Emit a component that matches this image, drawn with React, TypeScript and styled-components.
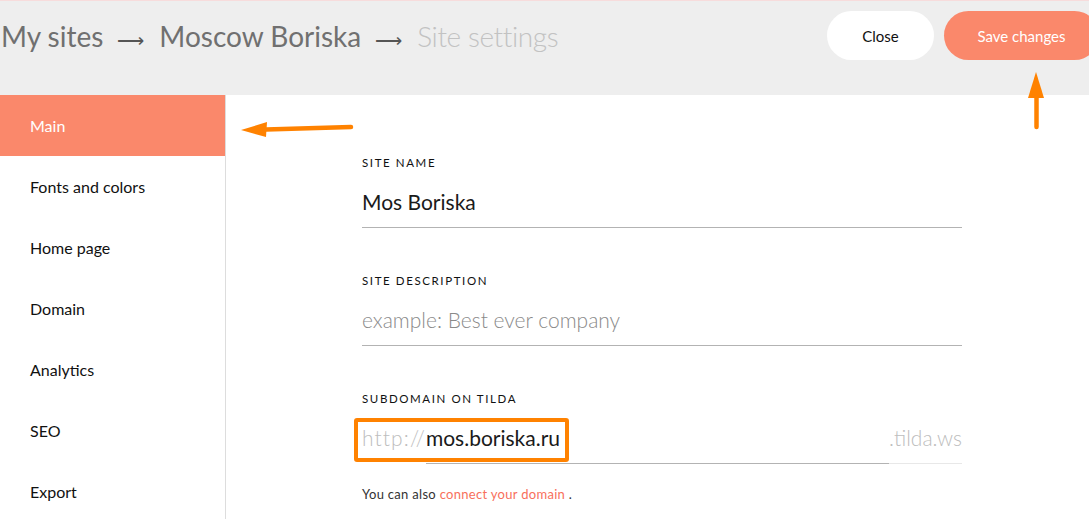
import React from "react";
import styled, { createGlobalStyle } from "styled-components";

const Global = createGlobalStyle`
  html, body { margin: 0; padding: 0; background: #fff; overflow: hidden; }
  body { font-family: "Lato", "Noto Sans", sans-serif; -webkit-font-smoothing: antialiased; }
  * { box-sizing: border-box; }
`;

const Page = styled.div`
  position: relative;
  width: 1089px;
  height: 519px;
  display: flex;
  flex-direction: column;
  overflow: hidden;
`;

const Header = styled.header`
  height: 95px;
  flex: none;
  background: #eeeeee;
  border-top: 1px solid #f7dcdc;
  display: flex;
  justify-content: space-between;
  align-items: flex-start;
  padding: 10px 0 0 1px;
`;

const Crumbs = styled.div`
  display: flex;
  align-items: baseline;
  gap: 14px;
  padding-top: 9px;
  font-size: 28px;
  line-height: 32px;
  color: #707070;
`;

const Crumb = styled.span<{ $current?: boolean }>`
  color: ${(p) => (p.$current ? "#c2c2c2" : "#707070")};
  font-weight: ${(p) => (p.$current ? 300 : 400)};
  letter-spacing: ${(p) => (p.$current ? "-0.4px" : "0")};
`;

const Sep = styled.span`
  font-size: 19px;
  color: #555;
  font-weight: 300;
  margin-right: 1px;
`;

const Actions = styled.div`
  display: flex;
  gap: 10px;
  margin-right: -10px;
`;

const Pill = styled.button<{ $primary?: boolean }>`
  height: 49px;
  border: none;
  border-radius: 25px;
  padding: 0;
  width: ${(p) => (p.$primary ? "155px" : "107px")};
  background: ${(p) => (p.$primary ? "#fa886b" : "#ffffff")};
  color: ${(p) => (p.$primary ? "#ffffff" : "#111111")};
  font-family: inherit;
  font-size: 15px;
  cursor: pointer;
`;

const Body = styled.div`
  flex: 1;
  display: flex;
  min-height: 0;
`;

const Sidebar = styled.nav`
  width: 226px;
  flex: none;
  border-right: 1px solid #dddddd;
  display: flex;
  flex-direction: column;
`;

const NavItem = styled.div<{ $active?: boolean }>`
  height: 61px;
  flex: none;
  display: flex;
  align-items: center;
  padding-left: 30px;
  font-size: 16px;
  color: ${(p) => (p.$active ? "#ffffff" : "#111111")};
  background: ${(p) => (p.$active ? "#fa886b" : "transparent")};
`;

const Content = styled.main`
  flex: 1;
  padding: 61px 0 0 136px;
`;

const Form = styled.div`
  width: 600px;
  display: flex;
  flex-direction: column;
  gap: 46px;
`;

const Field = styled.div`
  display: flex;
  flex-direction: column;
  gap: 17px;
`;

const Label = styled.div`
  font-size: 11.5px;
  line-height: 14px;
  letter-spacing: 1.6px;
  text-transform: uppercase;
  color: #111;
`;

const InputRow = styled.div`
  position: relative;
  display: flex;
  align-items: stretch;
`;

const Segment = styled.div<{ $tone: "value" | "placeholder" | "prefix" | "suffix"; $line: "dark" | "light" | "none"; $grow?: boolean }>`
  flex: ${(p) => (p.$grow ? "1" : "none")};
  font-size: 21px;
  line-height: 30px;
  padding-bottom: 10px;
  font-weight: ${(p) => (p.$tone === "value" ? 400 : 300)};
  letter-spacing: ${(p) => (p.$tone === "prefix" ? "1.1px" : "0")};
  color: ${(p) =>
    p.$tone === "value" ? "#1a1a1a" : p.$tone === "placeholder" ? "#8a8a8a" : "#bdbdbd"};
  border-bottom: 1px solid
    ${(p) => (p.$line === "dark" ? "#b3b3b3" : p.$line === "light" ? "#e8e8e8" : "transparent")};
  white-space: nowrap;
`;

const Highlight = styled.div`
  position: absolute;
  left: -8px;
  top: -5px;
  width: 215px;
  height: 44px;
  border: 4px solid #ff8200;
  border-radius: 3px;
  pointer-events: none;
`;

const Hint = styled.div`
  margin-top: -24px;
  font-size: 13px;
  line-height: 16px;
  letter-spacing: 0.3px;
  color: #333;
`;

const HintLink = styled.a`
  color: #f86f5b;
  text-decoration: none;
`;

const Annotation = styled.svg<{ $left: number; $top: number }>`
  position: absolute;
  left: ${(p) => p.$left}px;
  top: ${(p) => p.$top}px;
  overflow: visible;
  pointer-events: none;
`;

const navItems = ["Main", "Fonts and colors", "Home page", "Domain", "Analytics", "SEO", "Export"];

export default function App() {
  return (
    <>
      <Global />
      <Page>
        <Header>
          <Crumbs>
            <Crumb>My sites</Crumb>
            <Sep>⟶</Sep>
            <Crumb>Moscow Boriska</Crumb>
            <Sep>⟶</Sep>
            <Crumb $current>Site settings</Crumb>
          </Crumbs>
          <Actions>
            <Pill>Close</Pill>
            <Pill $primary>Save changes</Pill>
          </Actions>
        </Header>
        <Body>
          <Sidebar>
            {navItems.map((n, i) => (
              <NavItem key={n} $active={i === 0}>
                {n}
              </NavItem>
            ))}
          </Sidebar>
          <Content>
            <Form>
              <Field>
                <Label>Site name</Label>
                <InputRow>
                  <Segment $tone="value" $line="dark" $grow>
                    Mos Boriska
                  </Segment>
                </InputRow>
              </Field>
              <Field>
                <Label>Site description</Label>
                <InputRow>
                  <Segment $tone="placeholder" $line="dark" $grow>
                    example: Best ever company
                  </Segment>
                </InputRow>
              </Field>
              <Field>
                <Label>Subdomain on Tilda</Label>
                <InputRow>
                  <Segment $tone="prefix" $line="none">
                    http://
                  </Segment>
                  <Segment $tone="value" $line="dark" $grow>
                    mos.boriska.ru
                  </Segment>
                  <Segment $tone="suffix" $line="light">
                    .tilda.ws
                  </Segment>
                  <Highlight />
                </InputRow>
              </Field>
              <Hint>
                You can also <HintLink href="#">connect your domain</HintLink> .
              </Hint>
            </Form>
          </Content>
        </Body>
        <Annotation $left={240} $top={118} width="114" height="22" viewBox="0 0 114 22">
          <path d="M26 11.5 L111 9" stroke="#ff8200" strokeWidth="4.5" strokeLinecap="round" fill="none" />
          <path d="M1 12 L27 4 L26 19 Z" fill="#ff8200" />
        </Annotation>
        <Annotation $left={1026} $top={71} width="20" height="60" viewBox="0 0 20 60">
          <path d="M10.5 24 L10.5 56" stroke="#ff8200" strokeWidth="4.5" strokeLinecap="round" fill="none" />
          <path d="M10 1 L2 27 L18 27 Z" fill="#ff8200" />
        </Annotation>
      </Page>
    </>
  );
}
